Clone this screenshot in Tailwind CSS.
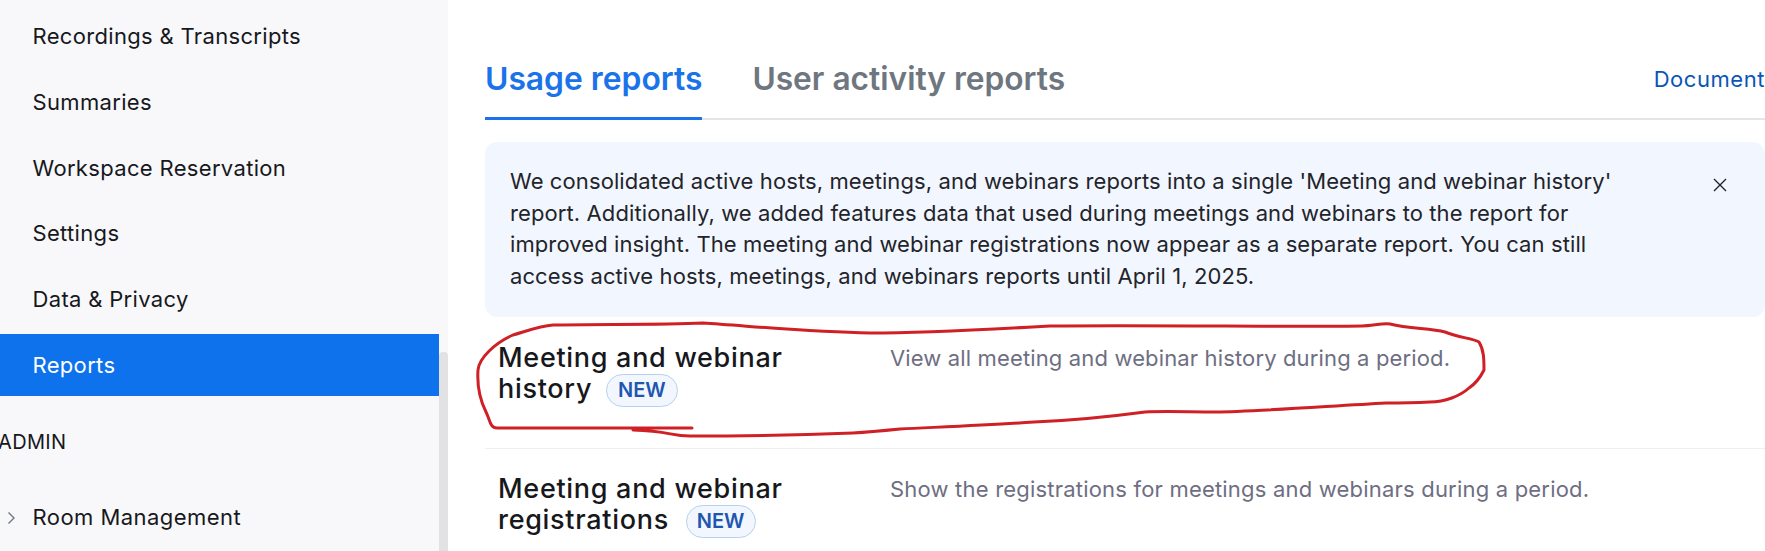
<!doctype html>
<html>
<head>
<meta charset="utf-8">
<script src="https://cdn.jsdelivr.net/npm/@tailwindcss/browser@4"></script>
</head>
<body class="m-0 overflow-hidden bg-white">
<div class="relative flex h-[551px] w-[1765px] overflow-hidden font-['Inter',sans-serif] text-[#17181c]">
  <aside class="relative h-full w-[448px] shrink-0 overflow-hidden bg-[#f8f8fb] pt-[5.5px] text-[22px] tracking-[0.33px]">
    <div class="mb-[3.8px] flex h-[62px] items-center pl-[32.5px]">Recordings &amp; Transcripts</div>
    <div class="mb-[3.8px] flex h-[62px] items-center pl-[32.5px]">Summaries</div>
    <div class="mb-[3.8px] flex h-[62px] items-center pl-[32.5px]">Workspace Reservation</div>
    <div class="mb-[3.8px] flex h-[62px] items-center pl-[32.5px]">Settings</div>
    <div class="mb-[3.8px] flex h-[62px] items-center pl-[32.5px]">Data &amp; Privacy</div>
    <div class="flex h-[62px] w-[439px] items-center bg-[#0e72ed] pl-[32.5px] text-white">Reports</div>
    <div class="-ml-[2px] mt-[32px] text-[20px] leading-[28px]">ADMIN</div>
    <div class="mt-[45px] flex items-center">
      <svg class="ml-[3px] mr-[13.5px] h-4 w-4" viewBox="0 0 16 16" fill="none" stroke="#6e7680" stroke-width="1.4"><path d="M5.5 2.5 L11 8 L5.5 13.5"/></svg>
      <span class="tracking-[0.45px]">Room Management</span>
    </div>
    <div class="absolute left-[439px] top-[352px] h-[199px] w-[9px] rounded-t-[4px] bg-[#e2e2e4]"></div>
  </aside>
  <main class="w-[1317px] shrink-0 pl-[37px]">
    <div class="mt-[53px] flex h-[67px] w-[1280px] items-start justify-between border-b-2 border-[#e3e5e8]">
      <div class="flex gap-[50px]">
        <div class="h-[67px] border-b-[3px] border-[#1a73e8] text-[31.8px] font-semibold leading-[52px] text-[#1a73e8]">Usage reports</div>
        <div class="text-[31.7px] font-semibold leading-[52px] text-[#6e7680]">User activity reports</div>
      </div>
      <div class="mt-[11px] whitespace-nowrap text-[22px] leading-[30px] tracking-[0.55px] text-[#0956b5]">Document</div>
    </div>
    <div class="mt-[22px] flex h-[175px] w-[1280px] items-start justify-between rounded-[12px] bg-[#f2f7ff] pl-[25px] pr-[38px] pt-[24px]">
      <p class="w-[1112px] text-[22px] leading-[31.5px] tracking-[0.1px] text-[#23242a]">We consolidated active hosts, meetings, and webinars reports into a single 'Meeting and webinar history' report. Additionally, we added features data that used during meetings and webinars to the report for improved insight. The meeting and webinar registrations now appear as a separate report. You can still access active hosts, meetings, and webinars reports until April 1, 2025.</p>
      <svg class="mt-[12px] h-[14px] w-[14px]" viewBox="0 0 14 14" fill="none" stroke="#23242a" stroke-width="1.4"><path d="M1 1 L13 13 M13 1 L1 13"/></svg>
    </div>
    <div class="flex h-[132px] w-[1280px] items-start border-b border-[#eeeff1] pl-[13px] pt-[25px]">
      <div class="w-[392px] text-[27px] font-medium leading-[31px] tracking-[0.7px]">Meeting and webinar<br>history <span class="ml-[6px] inline-block rounded-full border border-[#b6d0ee] bg-[#f2f7ff] px-[11px] align-[1px] text-[20px] font-semibold leading-[31px] tracking-normal text-[#1f57b0]">NEW</span></div>
      <div class="pt-[1px] text-[22px] leading-[30px] tracking-[0.14px] text-[#6e6e82]">View all meeting and webinar history during a period.</div>
    </div>
    <div class="flex w-[1280px] items-start pl-[13px] pt-[24px]">
      <div class="w-[392px] text-[27px] font-medium leading-[31px] tracking-[0.7px]">Meeting and webinar<br>registrations <span class="ml-[9px] inline-block rounded-full border border-[#b6d0ee] bg-[#f2f7ff] px-[10px] align-[1px] text-[20px] font-semibold leading-[31px] tracking-normal text-[#1f57b0]">NEW</span></div>
      <div class="pt-[1px] text-[22px] leading-[30px] tracking-[0.2px] text-[#6e6e82]">Show the registrations for meetings and webinars during a period.</div>
    </div>
  </main>
  <svg class="pointer-events-none absolute left-0 top-0" width="1765" height="551" viewBox="0 0 1765 551" fill="none">
    <path d="M692 428 L497 428 C490 428 490 420 486 412 C480 400 477 385 478 370 C479 358 495 343 513 335 C530 330 540 326 553 325 C600 324 660 325 703 323 C750 326 810 332 870 333 C900 333 980 330 1050 326 C1150 325 1300 327 1362 326 C1372 326 1382 323 1390 324 C1410 329 1430 328 1445 332 C1460 338 1472 338 1479 342 C1484 350 1484 360 1484 370 C1480 378 1475 384 1469 388 C1460 396 1445 402 1430 402 C1410 403 1400 403 1386 403 C1330 406 1250 412 1216 412 C1190 412 1165 411 1145 412 C1100 418 1060 421 1034 422 C990 425 940 427 900 429 C880 431 870 432 853 433 C800 435 740 436 690 436 C670 436 670 431 633 430" stroke="#cf2026" stroke-width="3" stroke-linecap="round" stroke-linejoin="round"/>
  </svg>
</div>
</body>
</html>
